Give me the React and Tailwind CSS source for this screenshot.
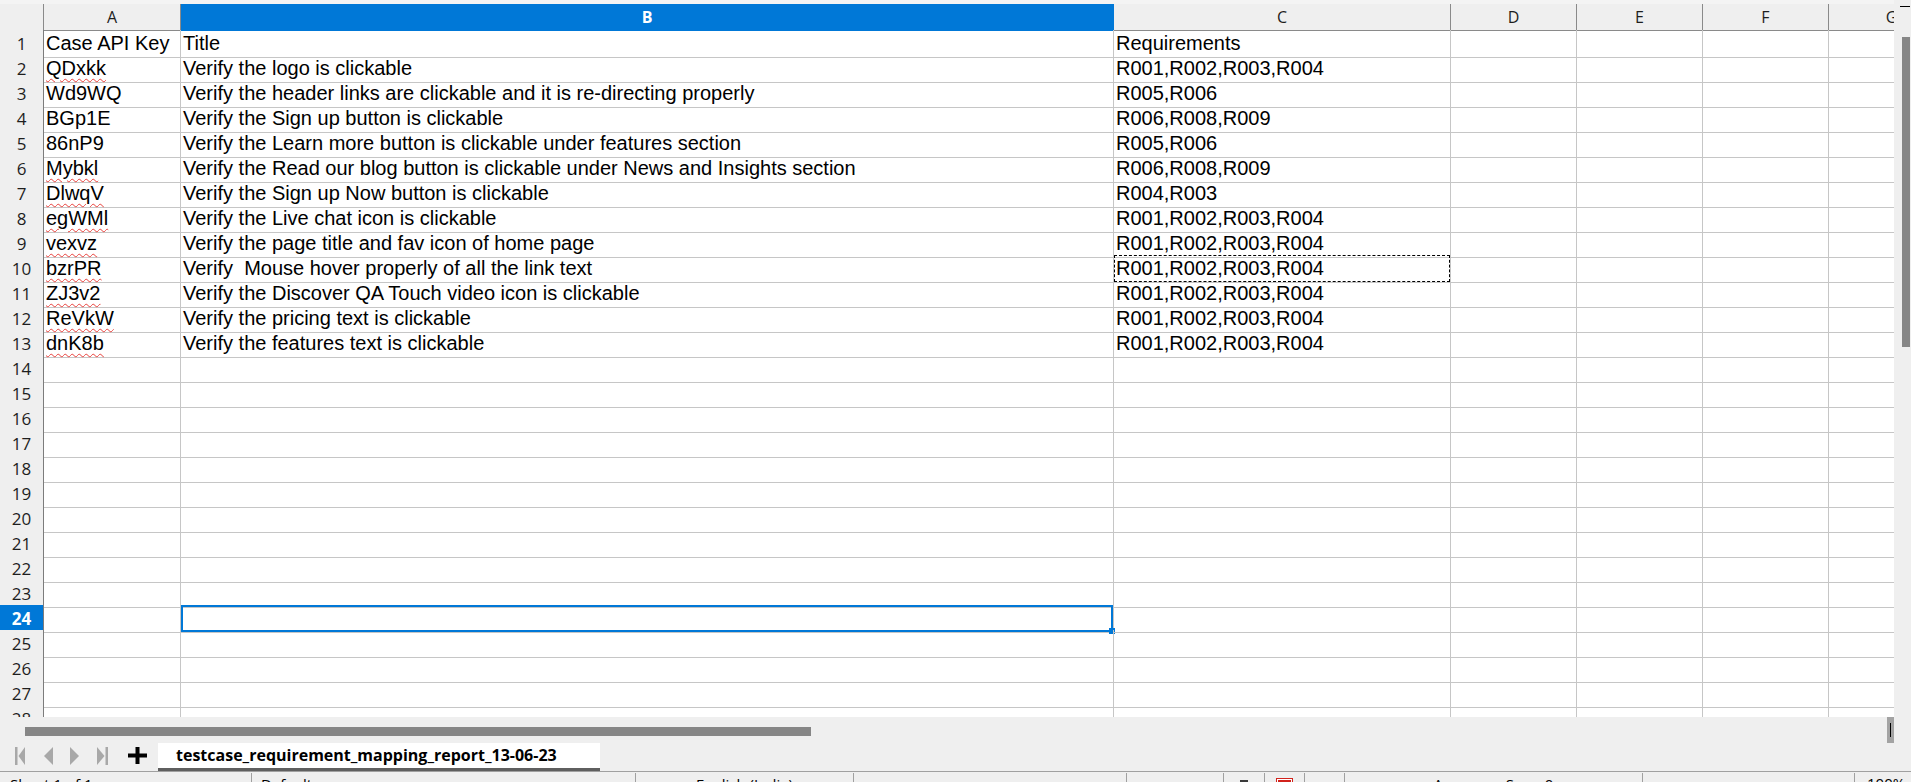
const COLS = ['A', 'B', 'C', 'D', 'E', 'F', 'G']

const rows = [
  ['Case API Key', 'Title', 'Requirements', false],
  ['QDxkk', 'Verify the logo is clickable', 'R001,R002,R003,R004', true],
  ['Wd9WQ', 'Verify the header links are clickable and it is re-directing properly', 'R005,R006', false],
  ['BGp1E', 'Verify the Sign up button is clickable', 'R006,R008,R009', false],
  ['86nP9', 'Verify the Learn more button is clickable under features section', 'R005,R006', false],
  ['Mybkl', 'Verify the Read our blog button is clickable under News and Insights section', 'R006,R008,R009', true],
  ['DlwqV', 'Verify the Sign up Now button is clickable', 'R004,R003', true],
  ['egWMl', 'Verify the Live chat icon is clickable', 'R001,R002,R003,R004', true],
  ['vexvz', 'Verify the page title and fav icon of home page', 'R001,R002,R003,R004', true],
  ['bzrPR', 'Verify  Mouse hover properly of all the link text', 'R001,R002,R003,R004', true],
  ['ZJ3v2', 'Verify the Discover QA Touch video icon is clickable', 'R001,R002,R003,R004', true],
  ['ReVkW', 'Verify the pricing text is clickable', 'R001,R002,R003,R004', true],
  ['dnK8b', 'Verify the features text is clickable', 'R001,R002,R003,R004', true],
]

const gridCols = 'grid grid-cols-[44px_137px_933px_337px_126px_126px_126px_126px]'
const cell = 'relative border-r border-b border-[#c6c6c6] px-[2px] text-[20px] leading-[26px] whitespace-pre text-black'
const font = { fontFamily: '"Liberation Sans", Arial, sans-serif' }
const uiFont = { fontFamily: '"Open Sans", "Noto Sans", sans-serif' }

function ColumnHeader() {
  return (
    <div className={`${gridCols} h-[26px]`} style={uiFont}>
      <div className="bg-[#efefef] border-r border-b border-[#8a8a8a]" />
      {COLS.map((c) => (
        <div
          key={c}
          className={
            c === 'B'
              ? 'bg-[#0078d7] text-white font-bold text-center text-[16px] leading-[26px] border-r border-b border-[#0078d7]'
              : 'bg-[#efefef] text-[#1e1e1e] text-center text-[16px] leading-[26px] border-r border-b border-[#8a8a8a]'
          }
        >
          {c}
        </div>
      ))}
    </div>
  )
}

function Row({ n }) {
  const data = rows[n - 1]
  const active = n === 24
  return (
    <div className={`${gridCols} h-[25px]`}>
      <div
        style={uiFont}
        className={
          active
            ? 'bg-[#0078d7] text-white font-bold text-center text-[17px] leading-[27px] border-r border-b border-r-[#7c7c7c] border-b-[#0078d7]'
            : 'bg-[#efefef] text-[#1e1e1e] text-center text-[17px] leading-[27px] border-r border-b border-r-[#7c7c7c] border-b-[#c6c6c6]'
        }
      >
        {n}
      </div>
      <div className={cell} style={font}>
        {data && (
          <span className={data[3] ? 'underline decoration-wavy decoration-[#e8413c] decoration-1 underline-offset-[3px]' : ''}>
            {data[0]}
          </span>
        )}
      </div>
      <div className={cell} style={font}>
        {data && data[1]}
        {active && (
          <div className="absolute inset-0 border-2 border-[#0078d7]">
            <div className="absolute -right-[4px] -bottom-[4px] w-[6px] h-[6px] bg-[#0078d7]" />
          </div>
        )}
      </div>
      <div className={cell} style={font}>
        {data && data[2]}
        {n === 10 && <div className="absolute inset-0 border border-dashed border-black" />}
      </div>
      <div className={cell} />
      <div className={cell} />
      <div className={cell} />
      <div className={cell} />
    </div>
  )
}

function NavIcons() {
  return (
    <svg width="152" height="28" viewBox="0 0 152 28">
      <g fill="#a8a8a8">
        <rect x="15" y="4" width="2.5" height="18" />
        <polygon points="25,4 25,22 18.5,13" />
        <polygon points="53,4 53,22 44,13" />
        <polygon points="70,4 70,22 79,13" />
        <polygon points="97,4 97,22 104.5,13" />
        <rect x="105.5" y="4" width="2.5" height="18" />
      </g>
      <g fill="#000">
        <rect x="135.5" y="4" width="4" height="17" />
        <rect x="128" y="10.5" width="19" height="4" />
      </g>
    </svg>
  )
}

function StatusBar() {
  const seg = 'h-full border-r border-[#a0a0a0] text-[15px] leading-[20px] pt-[1px] text-black whitespace-nowrap overflow-hidden'
  return (
    <div className="h-[11px] border-t border-[#a0a0a0] flex overflow-hidden" style={uiFont}>
      <div className={`${seg} w-[252px] pl-[10px] mt-[1px]`}>Sheet 1 of 1</div>
      <div className={`${seg} w-[384px] pl-[9px] mt-[1px]`}>Default</div>
      <div className={`${seg} w-[218px] text-center mt-[1px]`}>English (India)</div>
      <div className={`${seg} w-[273px] mt-[1px]`} />
      <div className={`${seg} w-[97px] mt-[1px]`} />
      <div className={`${seg} w-[41px] mt-[1px] flex justify-center`}>
        <div className="w-[8px] h-[8px] mt-[6px] bg-[#3a3a3a]" />
      </div>
      <div className={`${seg} w-[40px] mt-[1px] flex justify-center`}>
        <div className="w-[15px] h-[10px] mt-[5px] bg-[#d2231c] border border-white outline outline-1 outline-[#d2231c]" />
      </div>
      <div className={`${seg} w-[40px] mt-[1px]`} />
      <div className={`${seg} w-[298px] text-center mt-[1px]`}>Average: ; Sum: 0</div>
      <div className={`${seg} w-[212px] mt-[1px] flex items-start gap-[80px] pl-[40px]`}>
        <span>−</span>
        <span className="w-[6px] h-[14px] mt-[4px] bg-[#555]" />
        <span>+</span>
      </div>
      <div className="h-full text-[15px] leading-[20px] pt-[1px] pl-[12px] text-black">100%</div>
    </div>
  )
}

export default function App() {
  const nums = Array.from({ length: 28 }, (_, i) => i + 1)
  return (
    <div className="w-[1911px] h-[782px] overflow-hidden bg-[#efefef] flex flex-col select-none">
      <div className="flex h-[717px] shrink-0">
        <div className="w-[1894px] h-[717px] overflow-hidden flex flex-col">
          <div className="h-[4px] shrink-0 bg-[#f4f4f4]" />
          <div className="bg-white">
            <ColumnHeader />
            {nums.map((n) => (
              <Row key={n} n={n} />
            ))}
          </div>
        </div>
        <div className="w-[17px] h-[717px] bg-[#efefef] flex flex-col">
          <div className="h-[1px] w-[10px] ml-[6px] mt-[6px] bg-black" />
          <div className="w-[8px] h-[310px] ml-[8px] mt-[30px] bg-[#868686]" />
        </div>
      </div>

      <div className="h-[54px] shrink-0 flex flex-col">
        <div className="h-[26px] flex items-start">
          <div className="ml-[25px] mt-[10px] w-[786px] h-[9px] bg-[#868686]" />
          <div className="flex-1" />
          <div className="w-[7px] h-[26px] mr-[17px] bg-[#a3a3a3] flex items-center justify-center">
            <div className="w-[1px] h-[14px] bg-black" />
          </div>
        </div>
        <div className="h-[28px] flex items-stretch">
          <div className="w-[158px] shrink-0">
            <NavIcons />
          </div>
          <div
            className="w-[442px] bg-white border-b-[3px] border-[#5f5f5f] pl-[18px] text-[16px] font-bold leading-[25px] text-black"
            style={uiFont}
          >
            testcase_requirement_mapping_report_13-06-23
          </div>
        </div>
      </div>

      <StatusBar />
    </div>
  )
}
